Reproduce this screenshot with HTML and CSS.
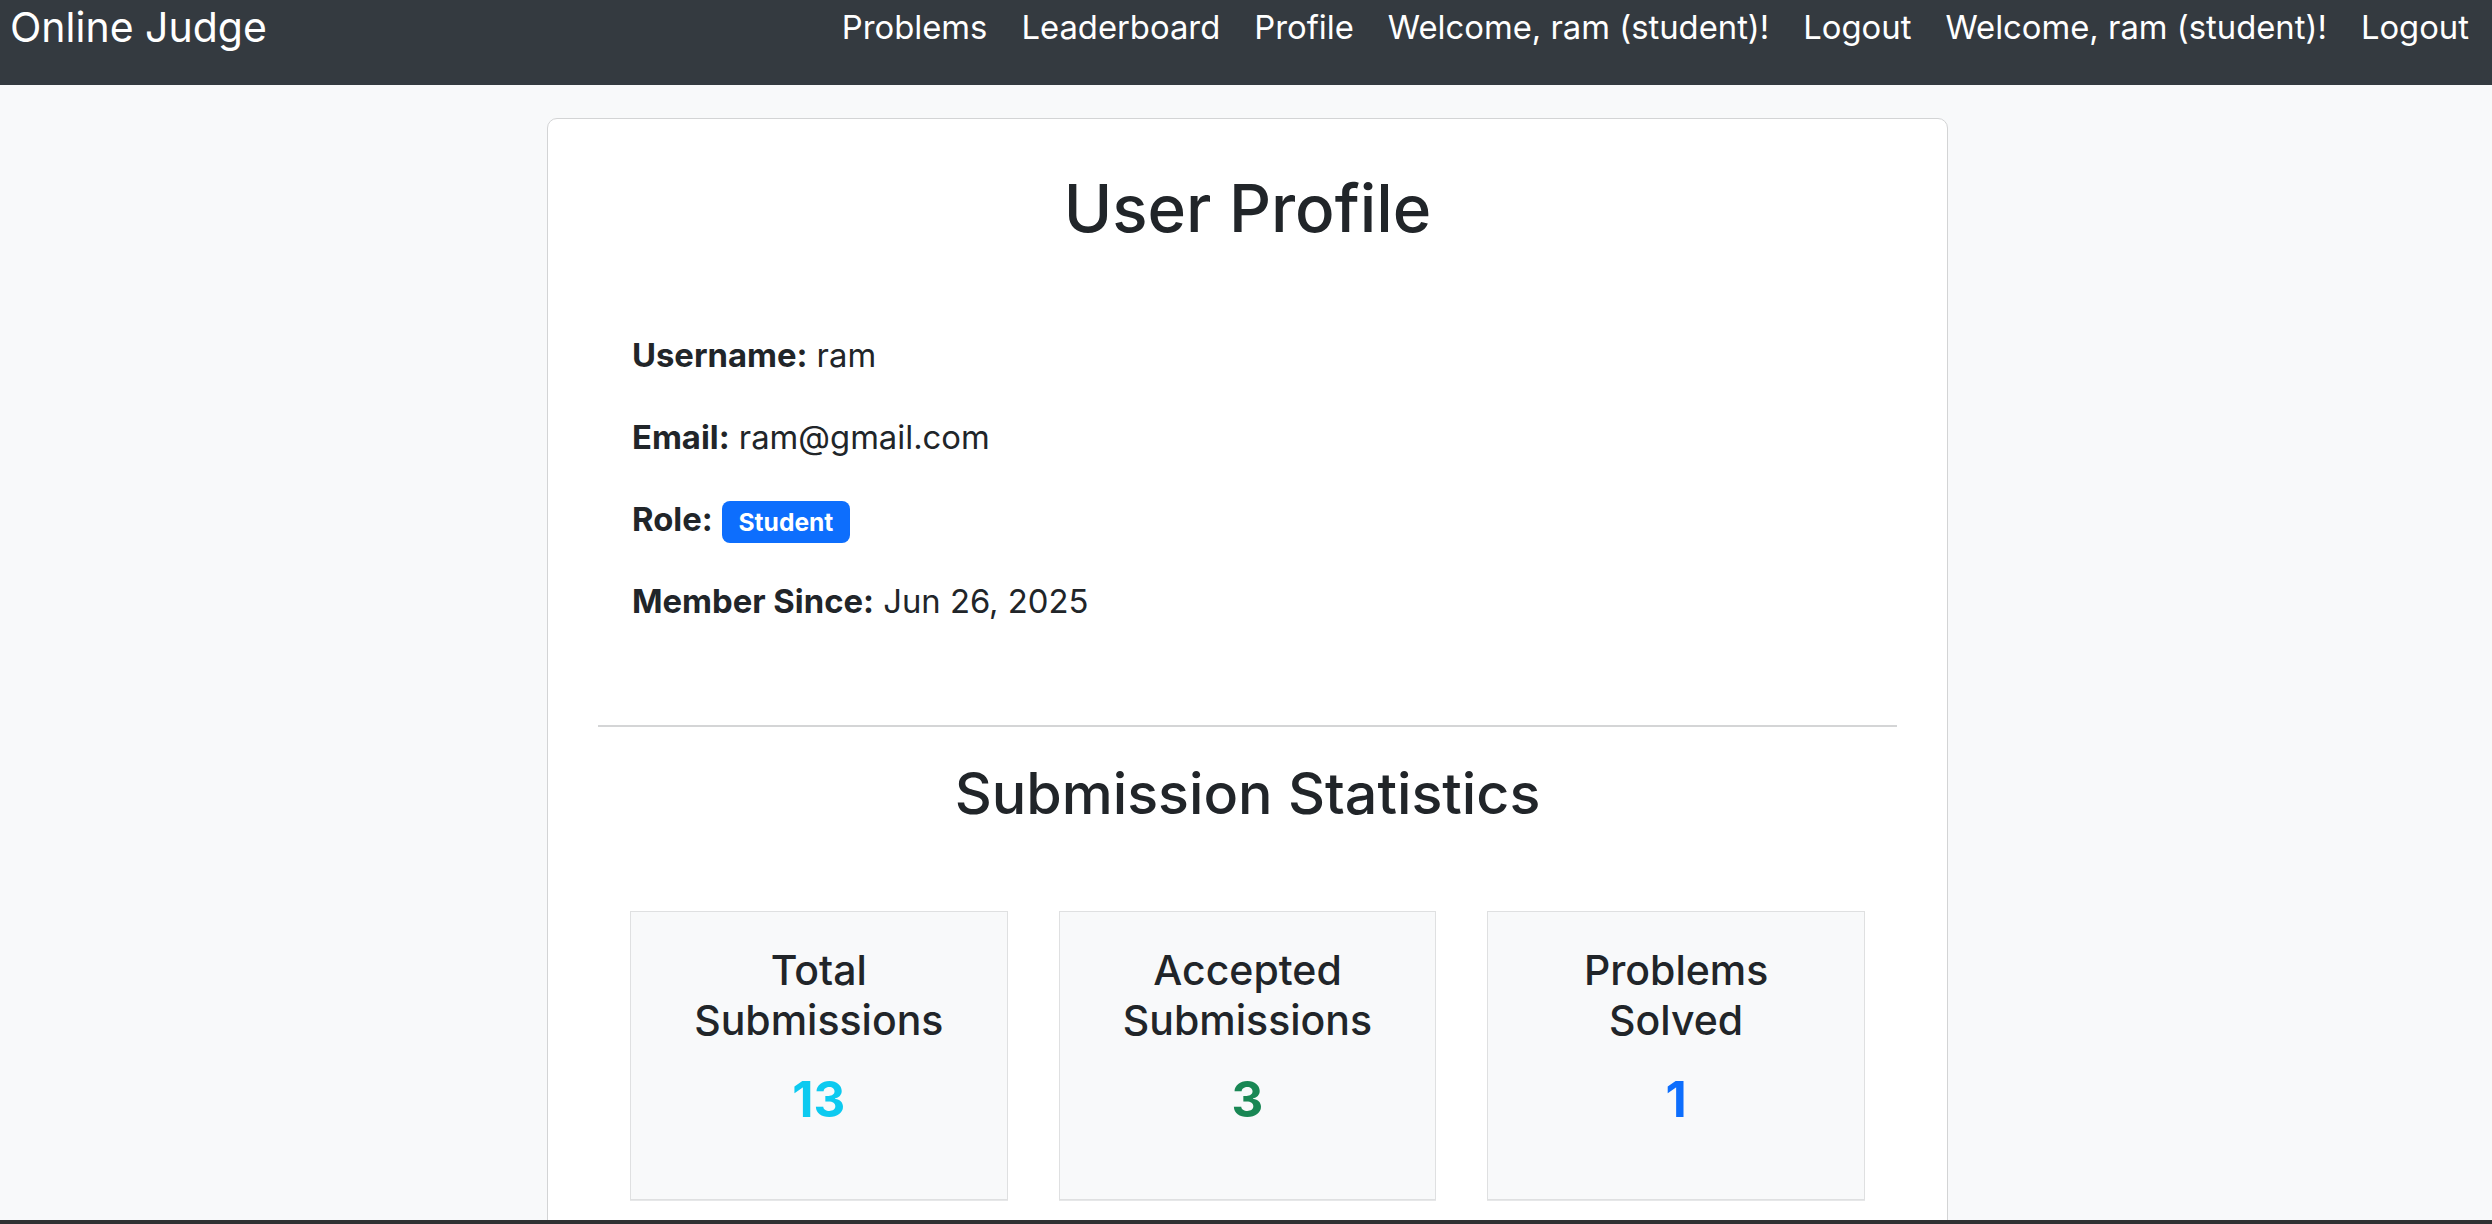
FILE: index.html
```html
<!DOCTYPE html>
<html lang="en">
<head>
<meta charset="utf-8">
<title>Online Judge - Profile</title>
<link rel="stylesheet" href="styles.css">
</head>
<body>
<nav class="navbar">
  <a class="brand" href="#">Online Judge</a>
  <ul class="nav-links">
    <li><a href="#">Problems</a></li>
    <li><a href="#">Leaderboard</a></li>
    <li><a href="#">Profile</a></li>
    <li><span>Welcome, ram (student)!</span></li>
    <li><a href="#">Logout</a></li>
    <li><span>Welcome, ram (student)!</span></li>
    <li><a href="#">Logout</a></li>
  </ul>
</nav>
<main class="page">
  <section class="card">
    <h2 class="title">User Profile</h2>
    <div class="info">
      <p><strong>Username:</strong> ram</p>
      <p><strong>Email:</strong> ram@gmail.com</p>
      <p><strong>Role:</strong> <span class="badge">Student</span></p>
      <p><strong>Member Since:</strong> Jun 26, 2025</p>
    </div>
    <hr class="divider">
    <h3 class="subtitle">Submission Statistics</h3>
    <div class="stats">
      <div class="stat">
        <h5 class="stat-label">Total Submissions</h5>
        <div class="stat-value cyan">13</div>
      </div>
      <div class="stat">
        <h5 class="stat-label">Accepted Submissions</h5>
        <div class="stat-value green">3</div>
      </div>
      <div class="stat">
        <h5 class="stat-label">Problems Solved</h5>
        <div class="stat-value blue">1</div>
      </div>
    </div>
  </section>
</main>
<div class="frame-edge"></div>
</body>
</html>
```
FILE: styles.css
```css
* { box-sizing: border-box; }
html, body { margin: 0; padding: 0; }
body {
  font-family: Inter, "Noto Sans", "Liberation Sans", sans-serif;
  font-size: 32.8px;
  color: #212529;
  background: #f8f9fa;
  overflow: hidden;
  height: 1224px;
}
a { text-decoration: none; color: inherit; }

.navbar {
  display: flex;
  align-items: flex-start;
  height: 85px;
  background: #343a40;
  padding: 0 6px 0 10px;
}
.brand {
  color: #fff;
  font-size: 41px;
  line-height: 50px;
  padding-top: 2px;
}
.nav-links {
  display: flex;
  list-style: none;
  margin: 0 0 0 auto;
  padding: 0;
}
.nav-links li a, .nav-links li span {
  display: block;
  color: #fff;
  font-size: 32.8px;
  line-height: 40px;
  padding: 7px 17px 0;
}

.page {
  padding: 33px 0 0 3px;
  display: flex;
  justify-content: center;
}
.card {
  width: 1401px;
  background: #fff;
  border: 1px solid #d3d4d5;
  border-radius: 10px;
  padding: 49px 50px 0;
  min-height: 1200px;
}
.title {
  margin: 0 0 82px;
  text-align: center;
  font-size: 65.6px;
  font-weight: 500;
  line-height: 80.6px;
}
.info { padding-left: 34px; }
.info p {
  margin: 0 0 33.2px;
  line-height: 49px;
}
.info strong { font-weight: 700; }
.badge {
  display: inline-block;
  background: #0d6efd;
  color: #fff;
  font-size: 24.6px;
  font-weight: 700;
  line-height: 1;
  padding: 8.9px 16.6px;
  border-radius: 8px;
  vertical-align: baseline;
}
.divider {
  border: 0;
  border-top: 2px solid #d4d5d6;
  margin: 99px 0 31px;
}
.subtitle {
  margin: 0 0 82px;
  text-align: center;
  font-size: 57.4px;
  font-weight: 500;
  line-height: 70.6px;
}
.stats {
  display: grid;
  grid-template-columns: repeat(3, 1fr);
  gap: 51px;
  padding: 0 32px;
}
.stat {
  background: #f8f9fa;
  border: 1px solid #dfe0e1;
  box-shadow: 0 1px 0 #e6e7e8;
  text-align: center;
  padding: 33px 31.5px 70px;
}
.stat-label {
  margin: 0 0 23px;
  font-size: 41px;
  font-weight: 500;
  line-height: 50.4px;
}
.stat-value {
  font-size: 49.2px;
  font-weight: 700;
  line-height: 60.5px;
}
.cyan { color: #0dcaf0; }
.green { color: #198754; }
.blue { color: #0d6efd; }

.frame-edge {
  position: fixed;
  left: 0;
  right: 0;
  bottom: 0;
  height: 4px;
  background: #2f3032;
}
```
